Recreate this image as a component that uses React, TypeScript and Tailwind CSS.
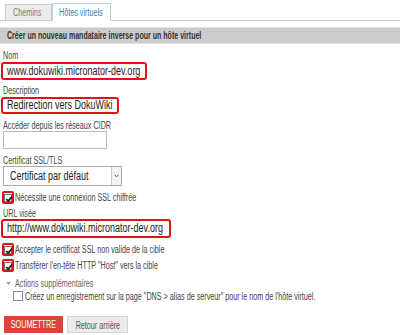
import React from "react";

// the reference renders its text narrow, so every run of text is squeezed horizontally
function T({
  children,
  className = "",
  center,
}: {
  children: React.ReactNode;
  className?: string;
  center?: boolean;
}) {
  return (
    <span
      className={
        "inline-block scale-x-[0.72] whitespace-nowrap " + (center ? "origin-center " : "origin-left ") + className
      }
    >
      {children}
    </span>
  );
}

function Tick() {
  return (
    <svg viewBox="0 0 10 10" className="h-[8px] w-[8px]">
      <path d="M1.5 5 L4 7.6 L8.7 2" fill="none" stroke="#222" strokeWidth="2.2" />
    </svg>
  );
}

function CheckRow({ label, className = "" }: { label: string; className?: string }) {
  return (
    <div className={"flex h-[13px] items-center " + className}>
      <span className="grid h-[13px] w-[12px] shrink-0 place-items-center rounded-[2px] border-2 border-[#e3121a]">
        <span className="grid h-[8px] w-[8px] place-items-center border border-[#777] bg-white">
          <Tick />
        </span>
      </span>
      <T className="ml-[1px] text-[10px] leading-[13px] text-[#444]">{label}</T>
    </div>
  );
}

function Label({ children, className = "" }: { children: React.ReactNode; className?: string }) {
  return (
    <div className={"h-[11px] pl-[2px] text-[10px] leading-[11px] text-[#444] " + className}>
      <T>{children}</T>
    </div>
  );
}

function RedField({ value, className = "" }: { value: string; className?: string }) {
  return (
    <div
      className={
        "flex items-center rounded-[3px] border-2 border-[#e3121a] bg-white pl-[4px] text-[12.5px] text-[#222] " +
        className
      }
    >
      <T>{value}</T>
    </div>
  );
}

function Button({ label, className = "" }: { label: string; className?: string }) {
  return (
    <div className={"flex h-[17px] justify-center overflow-visible text-[10px] leading-[17px] " + className}>
      <T center>{label}</T>
    </div>
  );
}

export default function App() {
  return (
    <div className="h-[335px] w-[400px] overflow-hidden bg-white font-['Liberation_Sans',Arial,sans-serif] text-[#333]">
      <div className="flex h-[21px] items-end border-b border-[#cccccc] pl-[5px]">
        <div className="flex h-[16px] w-[47px] items-center border border-b-0 border-[#cccccc] bg-[#ececec] pl-[7px] text-[10px] text-[#777]">
          <T>Chemins</T>
        </div>
        <div className="mb-[-1px] flex h-[18px] w-[59px] items-center border border-b-0 border-[#a8d8ef] bg-white pl-[6px] text-[10px] text-[#3c80c0]">
          <T>Hôtes virtuels</T>
        </div>
      </div>

      <div className="mt-[6px] flex h-[17px] items-center border-y border-[#e4e4e4] bg-[#cccccc] pl-[7px] text-[10px] font-bold text-[#333]">
        <T className="scale-x-[0.705]">Créer un nouveau mandataire inverse pour un hôte virtuel</T>
      </div>

      <div className="pl-[1px] pt-[6px]">
        <Label>Nom</Label>
        <RedField value="www.dokuwiki.micronator-dev.org" className="mt-[1px] h-[18px] w-[146px]" />

        <Label className="mt-[5px]">Description</Label>
        <RedField value="Redirection vers DokuWiki" className="mt-[1px] h-[17px] w-[118px]" />

        <Label className="mt-[6px]">Accéder depuis les réseaux CIDR</Label>
        <div className="ml-[2px] h-[18px] w-[104px] border border-[#bbbbbb] bg-white" />

        <Label className="mt-[6px] h-[10px] leading-[10px]">Certificat SSL/TLS</Label>
        <div className="ml-[2px] flex h-[20px] w-[119px] items-center border border-[#aaaaaa] bg-white">
          <div className="min-w-0 flex-1 pl-[6px] text-[12.5px] text-[#222]">
            <T>Certificat par défaut</T>
          </div>
          <span className="grid h-full w-[10px] shrink-0 place-items-center border-l border-[#cccccc] bg-[#f3f3f3]">
            <svg viewBox="0 0 8 6" className="h-[4px] w-[5px]">
              <path d="M1 1 L4 4.5 L7 1" fill="none" stroke="#555" strokeWidth="1.4" />
            </svg>
          </span>
        </div>

        <CheckRow className="ml-[1px] mt-[5px]" label="Nécessite une connexion SSL chiffrée" />

        <Label className="mt-[4px]">URL visée</Label>
        <RedField value="http://www.dokuwiki.micronator-dev.org" className="h-[19px] w-[170px]" />

        <CheckRow className="ml-[1px] mt-[5px]" label="Accepter le certificat SSL non valide de la cible" />
        <CheckRow className="ml-[1px] mt-[3px]" label={'Transférer l\'en-tête HTTP "Host" vers la cible'} />

        <div className="mt-[6px] flex h-[11px] items-center text-[10px] leading-[11px] text-[#666]">
          <svg viewBox="0 0 6 4" className="ml-[5px] h-[3px] w-[5px]">
            <path d="M0 0 L6 0 L3 4 Z" fill="#9a9a9a" />
          </svg>
          <T className="ml-[4px]">Actions supplémentaires</T>
        </div>
        <div className="mt-[1px] flex h-[12px] items-center pl-[12px]">
          <span className="h-[10px] w-[10px] shrink-0 border border-[#8a8a8a] bg-white" />
          <T className="ml-[2px] text-[10px] text-[#444]">
            Créez un enregistrement sur la page "DNS &gt; alias de serveur" pour le nom de l'hôte virtuel.
          </T>
        </div>

        <div className="ml-[3px] mt-[14px] flex gap-[4px]">
          <Button label="SOUMETTRE" className="w-[59px] bg-[#d8463b] text-white" />
          <Button label="Retour arrière" className="w-[61px] border border-[#d4d4d4] bg-[#ebebeb] text-[#555]" />
        </div>
      </div>
    </div>
  );
}
